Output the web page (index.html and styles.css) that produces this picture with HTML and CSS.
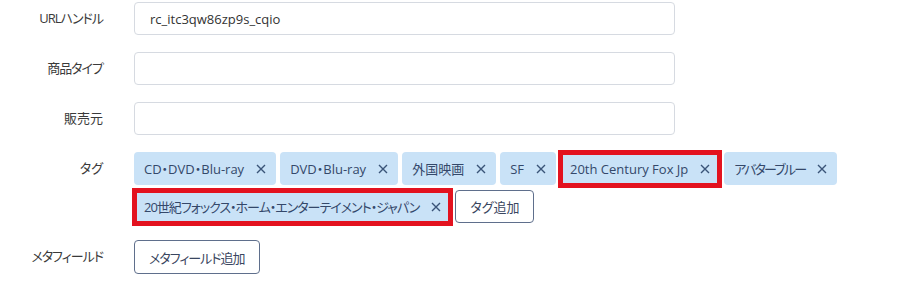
FILE: index.html
```html
<!DOCTYPE html>
<html lang="ja">
<head>
<meta charset="utf-8">
<link rel="stylesheet" href="styles.css">
</head>
<body>
<div class="form">
  <div class="row">
    <label class="label"><span class="jp">URLハンドル</span></label>
    <div class="control"><input class="input" type="text" value="rc_itc3qw86zp9s_cqio"></div>
  </div>
  <div class="row">
    <label class="label"><span class="jp">商品タイプ</span></label>
    <div class="control"><input class="input" type="text" value=""></div>
  </div>
  <div class="row">
    <label class="label">販売元</label>
    <div class="control"><input class="input" type="text" value=""></div>
  </div>
  <div class="row">
    <label class="label">タグ</label>
    <div class="tags">
      <span class="tag">CD・DVD・Blu-ray<svg class="x" viewBox="0 0 10 10"><path d="M1 1L9 9M9 1L1 9"/></svg></span>
      <span class="tag">DVD・Blu-ray<svg class="x" viewBox="0 0 10 10"><path d="M1 1L9 9M9 1L1 9"/></svg></span>
      <span class="tag">外国映画<svg class="x" viewBox="0 0 10 10"><path d="M1 1L9 9M9 1L1 9"/></svg></span>
      <span class="tag">SF<svg class="x" viewBox="0 0 10 10"><path d="M1 1L9 9M9 1L1 9"/></svg></span>
      <span class="tag hl">20th Century Fox Jp<svg class="x" viewBox="0 0 10 10"><path d="M1 1L9 9M9 1L1 9"/></svg></span>
      <span class="tag"><span class="jp2">アバターブルー</span><svg class="x" viewBox="0 0 10 10"><path d="M1 1L9 9M9 1L1 9"/></svg></span>
      <span class="tag hl"><span class="jp">20世紀フォックス・ホーム・エンターテイメント・ジャパン</span><svg class="x" viewBox="0 0 10 10"><path d="M1 1L9 9M9 1L1 9"/></svg></span>
      <button class="btn">タグ追加</button>
    </div>
  </div>
  <div class="row">
    <label class="label"><span class="jp">メタフィールド</span></label>
    <div class="control-auto"><button class="btn btn-tall"><span class="jp">メタフィールド追加</span></button></div>
  </div>
</div>
</body>
</html>
```

FILE: styles.css
```css
* { box-sizing: border-box; }
html, body { margin: 0; padding: 0; background: #fff; }
body {
  font-family: "Open Sans", "Noto Sans CJK JP", sans-serif;
  font-size: 13px;
  font-feature-settings: "palt";
  color: #333;
}
.jp { letter-spacing: -1px; }
.jp2 { letter-spacing: -1.8px; }
.form { padding-top: 2px; }
.row {
  display: flex;
  align-items: flex-start;
  margin-bottom: 17px;
}
.label {
  width: 134px;
  padding-right: 31px;
  text-align: right;
  line-height: 33px;
  color: #3a3a3a;
  flex: none;
}
.control { width: 541px; }
.input {
  display: block;
  width: 100%;
  height: 33px;
  border: 1px solid #d6dae1;
  border-radius: 4px;
  padding: 0 15px;
  font: inherit;
  font-feature-settings: "palt";
  color: #333;
  outline: none;
}
.tags {
  display: flex;
  flex-wrap: wrap;
  gap: 5px 4px;
  width: 720px;
}
.tag {
  display: inline-flex;
  align-items: center;
  gap: 12px;
  height: 33px;
  padding: 0 10px;
  background: #c9e2f7;
  border-radius: 4px;
  color: #34486a;
  white-space: nowrap;
}
.tag.hl { position: relative; }
.tag.hl::after {
  content: "";
  position: absolute;
  top: -2px;
  right: -2px;
  bottom: -3px;
  left: -2px;
  border: 5px solid #e3121f;
  pointer-events: none;
}
.x {
  width: 10px;
  height: 10px;
  stroke: #3a5478;
  stroke-width: 1.4;
  fill: none;
}
.btn {
  height: 33px;
  padding: 0 14px;
  background: #fff;
  border: 1px solid #5f6f8c;
  border-radius: 4px;
  font: inherit;
  font-feature-settings: "palt";
  color: #3a4660;
  cursor: pointer;
}
.btn-tall { height: 34px; }
```
